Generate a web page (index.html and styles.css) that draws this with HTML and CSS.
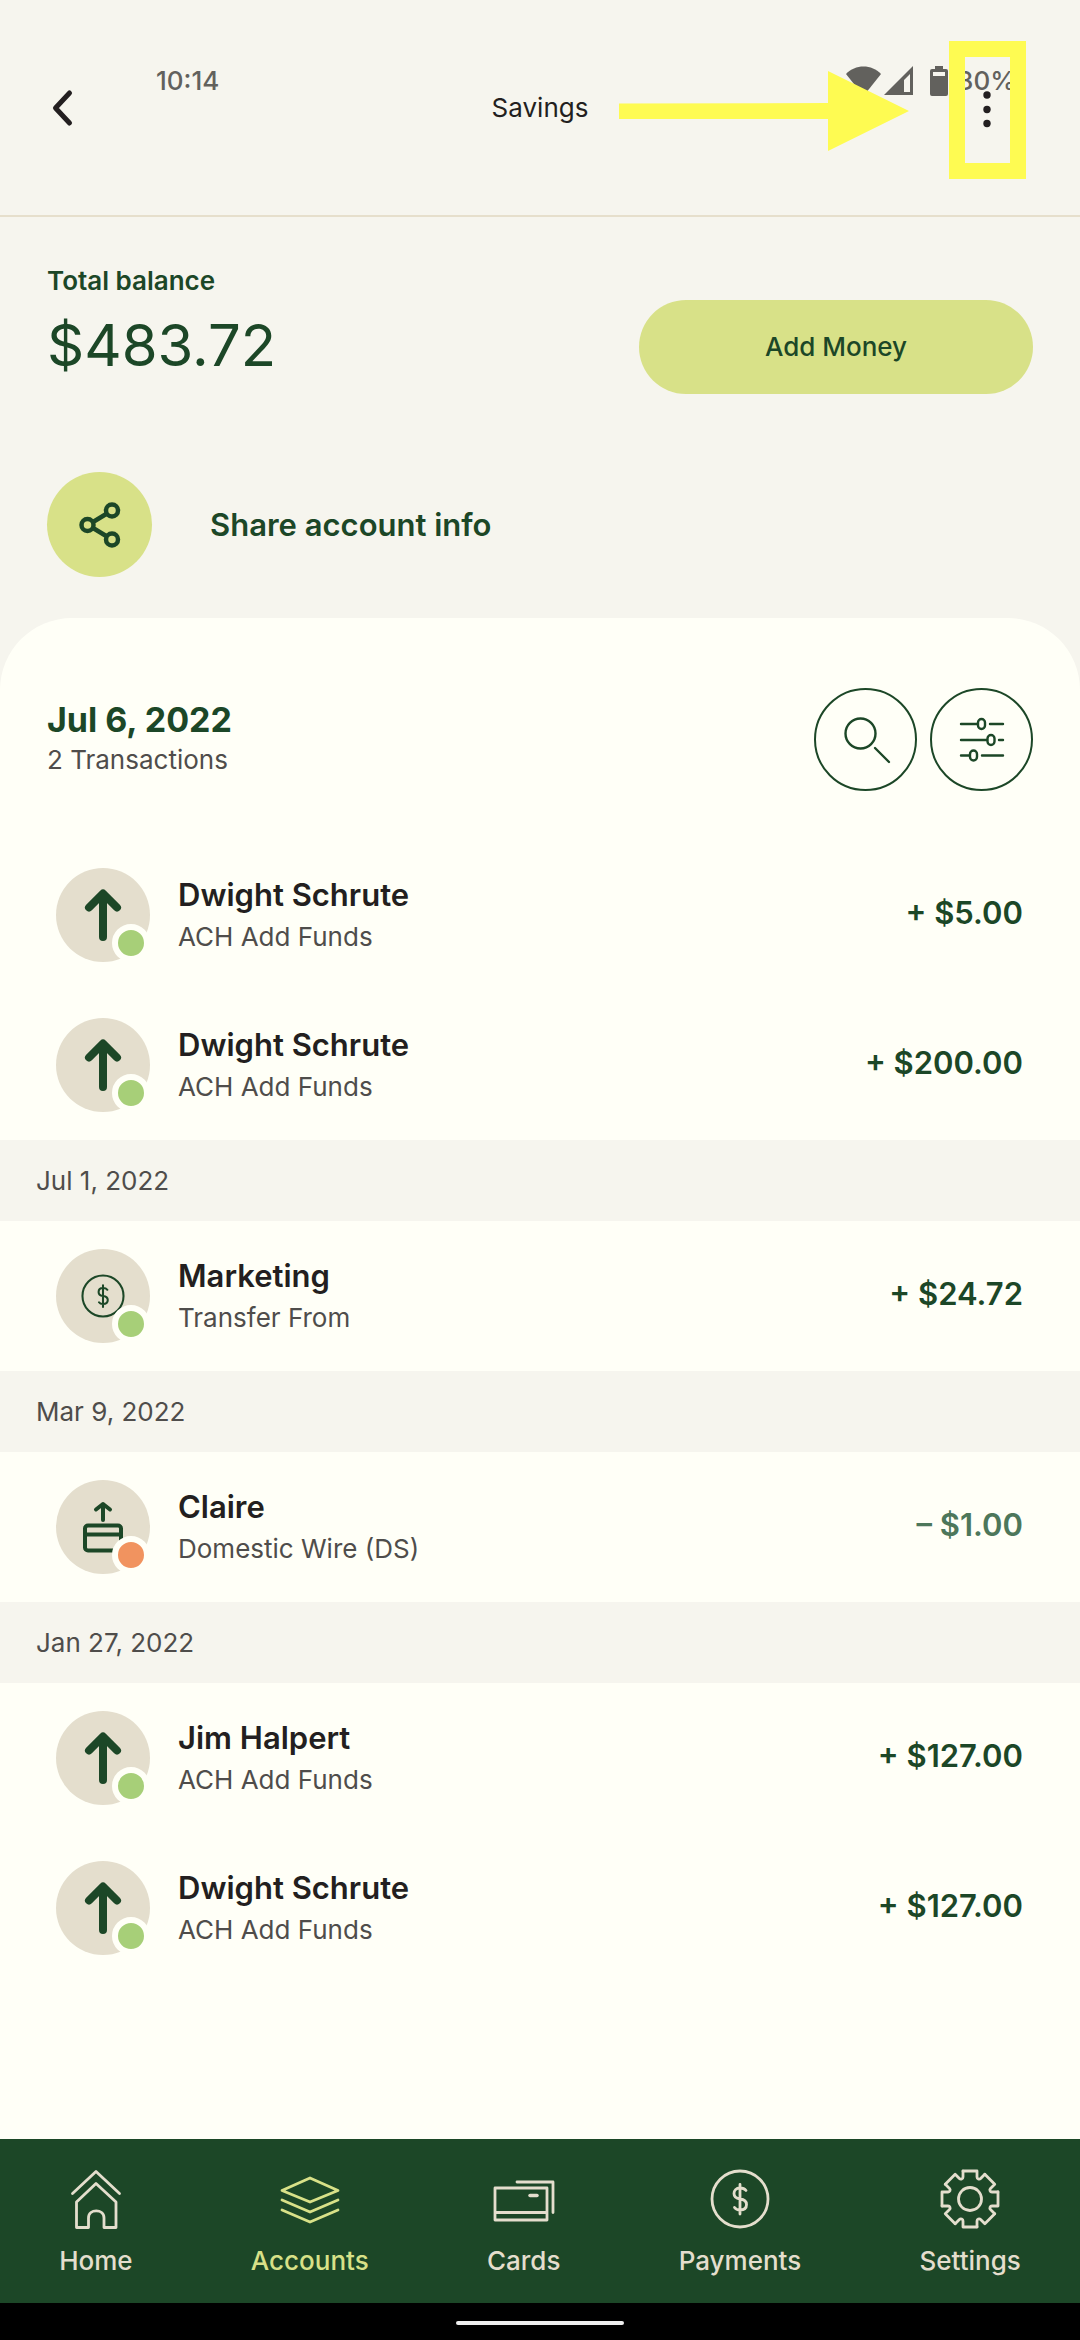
FILE: index.html
```html
<!DOCTYPE html>
<html lang="en">
<head>
  <meta charset="UTF-8">
  <meta name="viewport" content="width=device-width, initial-scale=1.0">
  <title>Savings</title>
  <link rel="stylesheet" href="styles.css">
</head>
<body>
  <!-- icons used more than once -->
  <svg class="defs" aria-hidden="true">
    <symbol id="arrow-up" viewBox="0 0 94 94">
      <path d="M47 69V26M33 39.500L47 25.500L61 39.500" fill="none" stroke="#1c4727" stroke-width="8" stroke-linecap="round" stroke-linejoin="round"/>
    </symbol>
    <symbol id="dollar" viewBox="0 0 60 60">
      <circle cx="30" cy="30" r="28"/>
      <path d="M30 15.500V45M36 21.500C34.500 19.500 32.500 19 30 19C26 19 24 21.500 24 24.500C24 28 26.500 29.500 30 30C34 30.500 36.500 32 36.500 35.500C36.500 39 34 41 30 41C27.500 41 25.500 40 24.500 38.500"/>
    </symbol>
  </svg>

  <header class="header">
    <div class="statusbar">
      <span>10:14</span>
      <span class="status-icons">
        <svg width="103" height="32" viewBox="0 0 103 32" fill="#62615d">
          <path d="M0 9C9 -1 26 -1 35 9L17.500 31Z"/>
          <path fill-rule="evenodd" d="M67 1V30H38ZM64 9L58 15V27H64Z"/>
          <path fill-rule="evenodd" d="M89 1H97V4H100Q102 4 102 6V29Q102 31 100 31H86Q84 31 84 29V6Q84 4 86 4H89ZM87 7V11H99V7Z"/>
        </svg>
        <span>80%</span>
      </span>
    </div>
    <button class="icon-btn" aria-label="Back">
      <svg width="40" height="40" viewBox="0 0 40 40"><path d="M25.500 5L11.500 20L25.500 35" fill="none" stroke="#231f20" stroke-width="5" stroke-linecap="round" stroke-linejoin="round"/></svg>
    </button>
    <h1>Savings</h1>
    <button class="icon-btn menu-btn" aria-label="More options">
      <svg width="40" height="40" viewBox="0 0 40 40" fill="#231f20"><circle cx="20" cy="7" r="3.700"/><circle cx="20" cy="21.500" r="3.700"/><circle cx="20" cy="35.500" r="3.700"/></svg>
    </button>
    <svg class="hint-arrow" width="290" height="80" viewBox="0 0 290 80" fill="#fefb52"><path d="M0 32.500L209 32V0L290 40L209 80V48H0Z"/></svg>
    <div class="hint-box"></div>
  </header>

  <section class="balance">
    <div>
      <p class="balance-label">Total balance</p>
      <p class="balance-amount">$483.72</p>
    </div>
    <button class="add-money">Add Money</button>
  </section>

  <button class="share">
    <span class="share-icon">
      <svg width="42" height="48" viewBox="0 0 42 48" fill="none" stroke="#1c4727" stroke-width="4.500"><circle cx="8.500" cy="24" r="6"/><circle cx="33" cy="9.500" r="6"/><circle cx="33" cy="38.500" r="6"/><path d="M14 21L28 12.500M14 27L28 35.500"/></svg>
    </span>
    Share account info
  </button>

  <main class="sheet">
    <div class="sheet-head">
      <div class="sheet-title">
        <h2>Jul 6, 2022</h2>
        <p>2 Transactions</p>
      </div>
      <div class="tools">
        <button class="round-btn" aria-label="Search">
          <svg width="60" height="60" viewBox="0 0 60 60"><circle cx="24.500" cy="23.500" r="15"/><path d="M39 38L53 52"/></svg>
        </button>
        <button class="round-btn" aria-label="Filter">
          <svg width="60" height="60" viewBox="0 0 60 60"><path d="M9 14H25M38 14H51M9 30H35M47 30H51M9 45.500H17M30 45.500H51"/><rect x="26" y="9" width="7" height="10" rx="3.500"/><rect x="35.500" y="25" width="7" height="10" rx="3.500"/><rect x="18" y="40.500" width="7" height="10" rx="3.500"/></svg>
        </button>
      </div>
    </div>

    <ul class="list">
      <li>
        <span class="avatar"><svg><use href="#arrow-up"/></svg></span>
        <div class="who"><h3>Dwight Schrute</h3><p>ACH Add Funds</p></div>
        <span class="amount">+ $5.00</span>
      </li>
      <li>
        <span class="avatar"><svg><use href="#arrow-up"/></svg></span>
        <div class="who"><h3>Dwight Schrute</h3><p>ACH Add Funds</p></div>
        <span class="amount">+ $200.00</span>
      </li>
    </ul>

    <h2 class="date">Jul 1, 2022</h2>
    <ul class="list">
      <li>
        <span class="avatar"><svg class="coin"><use href="#dollar"/></svg></span>
        <div class="who"><h3>Marketing</h3><p>Transfer From</p></div>
        <span class="amount">+ $24.72</span>
      </li>
    </ul>

    <h2 class="date">Mar 9, 2022</h2>
    <ul class="list">
      <li>
        <span class="avatar out">
          <svg viewBox="0 0 94 94" fill="none" stroke="#1c4727" stroke-width="4" stroke-linejoin="round" stroke-linecap="round"><path d="M47 40V24M40 29.500L47 24L54 29.500"/><rect x="29" y="45.500" width="36" height="25" rx="3"/><path d="M30 54.500H64"/></svg>
        </span>
        <div class="who"><h3>Claire</h3><p>Domestic Wire (DS)</p></div>
        <span class="amount debit">– $1.00</span>
      </li>
    </ul>

    <h2 class="date">Jan 27, 2022</h2>
    <ul class="list">
      <li>
        <span class="avatar"><svg><use href="#arrow-up"/></svg></span>
        <div class="who"><h3>Jim Halpert</h3><p>ACH Add Funds</p></div>
        <span class="amount">+ $127.00</span>
      </li>
      <li>
        <span class="avatar"><svg><use href="#arrow-up"/></svg></span>
        <div class="who"><h3>Dwight Schrute</h3><p>ACH Add Funds</p></div>
        <span class="amount">+ $127.00</span>
      </li>
    </ul>
  </main>

  <nav class="tabs">
    <a href="#">
      <svg viewBox="0 0 60 60"><path d="M6.500 24.500L30 2.500L53.500 24.500"/><path d="M10.500 58.500V33L30 14.500L50 33V58.500H38V49C38 39.500 22.500 39.500 22.500 49V58.500Z"/></svg>
      Home
    </a>
    <a href="#" class="active">
      <svg viewBox="0 0 60 60"><path d="M2 21.500L30 9L58 21.500L30 33Z"/><path d="M2 31L30 43L58 31M2 41L30 53L58 41"/></svg>
      Accounts
    </a>
    <a href="#">
      <svg viewBox="0 0 60 60"><path d="M1 19H53V51H1ZM1 43.500H53M23 13H59V43.500"/><path d="M36 26.500H43" stroke-width="3.500"/></svg>
      Cards
    </a>
    <a href="#">
      <svg><use href="#dollar"/></svg>
      Payments
    </a>
    <a href="#">
      <svg viewBox="-30 -30 60 60">
        <circle r="11.500"/>
        <path id="tooth" d="M-7 -28H7V-22A2.100 2.100 0 0 0 10.600 -20.500L14.800 -24.700"/>
        <use href="#tooth" transform="rotate(45)"/>
        <use href="#tooth" transform="rotate(90)"/>
        <use href="#tooth" transform="rotate(135)"/>
        <use href="#tooth" transform="rotate(180)"/>
        <use href="#tooth" transform="rotate(225)"/>
        <use href="#tooth" transform="rotate(270)"/>
        <use href="#tooth" transform="rotate(315)"/>
      </svg>
      Settings
    </a>
  </nav>
  <div class="gesture-bar"><span></span></div>
</body>
</html>
```

FILE: styles.css
```css
*,
*::after {
  box-sizing: border-box;
}

body {
  margin: 0;
  min-height: 100vh;
  display: flex;
  flex-direction: column;
  background-color: #f6f5ee;
  color: #231f20;
  font-family: Inter, "Open Sans", sans-serif;
  font-size: 26px;
  line-height: 32px;
}

h1, h2, h3, p, ul {
  margin: 0;
  padding: 0;
  font-weight: 400;
  font-size: 26px;
}

button {
  border: 0;
  padding: 0;
  background: none;
  font: inherit;
  color: #1c4727;
  cursor: pointer;
}

svg {
  display: block;
}

.defs {
  position: absolute;
  width: 0;
  height: 0;
}

/* header */
.header {
  position: relative;
  display: flex;
  justify-content: space-between;
  align-items: center;
  padding: 72px 48px 71px 40px;
  border-bottom: 2px solid #e6dfcc;
}

.icon-btn {
  display: flex;
  justify-content: center;
  align-items: center;
  width: 48px;
  height: 72px;
}

.menu-btn {
  width: 90px;
}

.header h1 {
  position: absolute;
  left: 0;
  right: 0;
  text-align: center;
  pointer-events: none;
}

/* the system status bar is drawn over the header */
.statusbar {
  position: absolute;
  top: 65px;
  left: 0;
  right: 0;
  display: flex;
  justify-content: space-between;
  padding: 0 64px 0 156px;
  color: #62615d;
  font-weight: 500;
  pointer-events: none;
}

.status-icons {
  display: flex;
  gap: 8px;
}

.hint-arrow {
  position: absolute;
  top: 71px;
  right: 171px;
}

.hint-box {
  position: absolute;
  top: 41px;
  right: 54px;
  width: 77px;
  height: 138px;
  border: 16px solid #fefb52;
  pointer-events: none;
}

/* balance */
.balance {
  display: flex;
  justify-content: space-between;
  align-items: center;
  padding: 47px 47px 0;
  color: #1c4727;
}

.balance-label {
  font-weight: 600;
}

.balance-amount {
  font-size: 58px;
  line-height: 96px;
  font-weight: 400;
}

.add-money {
  width: 394px;
  height: 94px;
  margin-top: 36px;
  border-radius: 47px;
  background-color: #d8e188;
  font-weight: 500;
}

.share {
  display: flex;
  align-items: center;
  align-self: flex-start;
  gap: 58px;
  margin: 78px 47px 41px;
  font-size: 31px;
  font-weight: 600;
}

.share-icon {
  display: flex;
  justify-content: center;
  align-items: center;
  width: 105px;
  height: 105px;
  border-radius: 50%;
  background-color: #d8e188;
}

/* transactions */
.sheet {
  flex: 1;
  border-radius: 72px 72px 0 0;
  background-color: #fffff7;
}

.sheet-head {
  display: flex;
  justify-content: space-between;
  align-items: center;
  padding: 70px 47px 49px;
}

.sheet-title {
  padding-bottom: 8px;
}

.sheet-head h2 {
  color: #1c4727;
  font-size: 34px;
  line-height: 48px;
  font-weight: 700;
}

.sheet-head p,
.who p,
.date {
  color: #4f4d4b;
}

.tools {
  display: flex;
  gap: 13px;
}

.round-btn {
  display: flex;
  justify-content: center;
  align-items: center;
  width: 103px;
  height: 103px;
  border: 2px solid #1c4727;
  border-radius: 50%;
}

.round-btn svg {
  fill: none;
  stroke: #1c4727;
  stroke-width: 2.4;
  stroke-linecap: round;
}

.list {
  list-style: none;
}

.list li {
  display: flex;
  align-items: center;
  padding: 28px 57px 28px 56px;
}

.avatar {
  position: relative;
  display: flex;
  justify-content: center;
  align-items: center;
  width: 94px;
  height: 94px;
  margin-right: 28px;
  border-radius: 50%;
  background-color: #e4decd;
}

.avatar svg {
  width: 94px;
  height: 94px;
}

.avatar .coin {
  width: 44px;
  height: 44px;
  fill: none;
  stroke: #1c4727;
  stroke-width: 2.8;
  stroke-linecap: round;
}

/* credit / debit dot */
.avatar::after {
  content: "";
  position: absolute;
  right: 0;
  bottom: 0;
  width: 38px;
  height: 38px;
  border: 6px solid #fffff7;
  border-radius: 50%;
  background-color: #a7cf78;
}

.avatar.out::after {
  background-color: #f1935f;
}

.who {
  flex: 1;
  padding-top: 4px;
}

.who h3 {
  font-size: 31px;
  line-height: 40px;
  font-weight: 600;
}

.who p {
  line-height: 44px;
}

.amount {
  padding-bottom: 4px;
  color: #1c4727;
  font-size: 31px;
  font-weight: 600;
}

.amount.debit {
  color: #4d775b;
}

.date {
  padding: 25px 36px 24px;
  background-color: #f6f5ee;
}

/* bottom navigation */
.tabs {
  display: flex;
  justify-content: space-around;
  padding: 30px 0 26px;
  background-color: #1c4727;
}

.tabs a {
  display: flex;
  flex-direction: column;
  align-items: center;
  gap: 16px;
  color: #e4decd;
  font-weight: 500;
  text-decoration: none;
}

.tabs a.active {
  color: #d8e188;
}

.tabs svg {
  width: 60px;
  height: 60px;
  overflow: visible;
  fill: none;
  stroke: currentColor;
  stroke-width: 2.8;
  stroke-linecap: round;
  stroke-linejoin: round;
}

.gesture-bar {
  display: flex;
  justify-content: center;
  padding: 18px 0 15px;
  background-color: #000;
}

.gesture-bar span {
  width: 168px;
  height: 4px;
  border-radius: 2px;
  background-color: #eee;
}
```
